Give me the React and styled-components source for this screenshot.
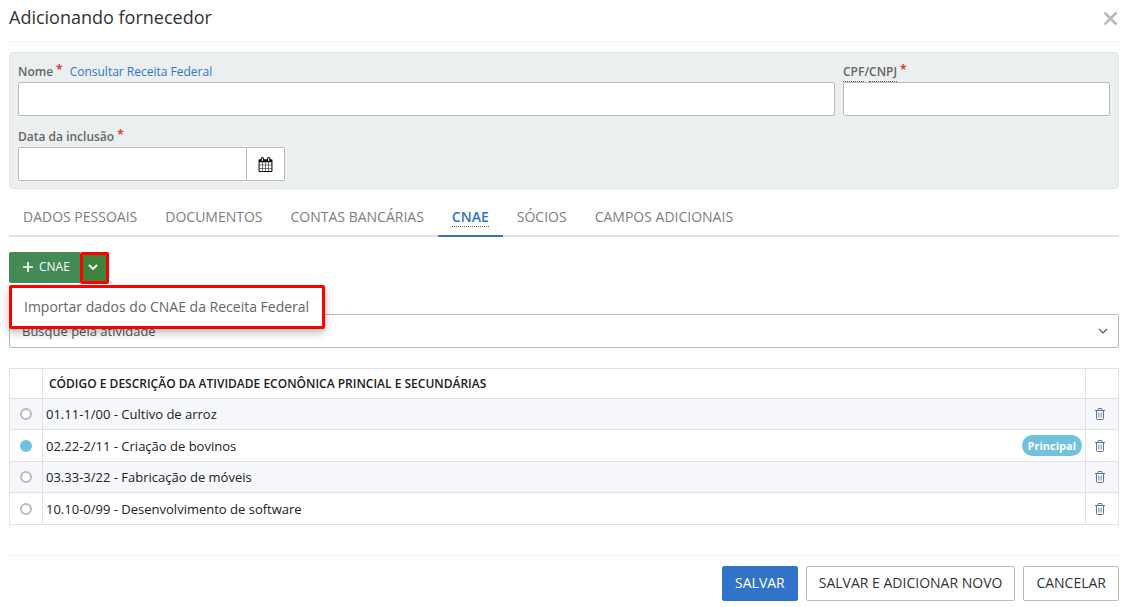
import React, { useState } from 'react';
import styled, { createGlobalStyle, css } from 'styled-components';

const GlobalStyle = createGlobalStyle`
    * {
        box-sizing: border-box;
    }
    body {
        margin: 0;
        background: #fff;
        color: #212121;
        font-family: "Open Sans", "Noto Sans", sans-serif;
        font-size: 13px;
    }
    button, input, select {
        font-family: inherit;
    }
`

const Modal = styled.div`
    padding: 0 10px 0 9px;
`

const Header = styled.header`
    display: flex;
    align-items: center;
    justify-content: space-between;
    height: 42px;
    padding-bottom: 7px;
    border-bottom: 1px solid #f4f4f4;
`

const Title = styled.h1`
    margin: 0;
    font-size: 18px;
    font-weight: 400;
    line-height: 24px;
    color: #333;
`

const CloseButton = styled.button`
    display: flex;
    padding: 3px 1px 0;
    border: 0;
    background: none;
    color: #bbb;
    cursor: pointer;
`

const Panel = styled.form`
    display: grid;
    grid-template-columns: repeat(12, 1fr);
    gap: 11px 8px;
    margin-top: 10px;
    padding: 9px 8px 7px;
    border: 1px solid #e2e5e6;
    border-radius: 4px;
    background: #ebeff0;
`

const Field = styled.div`
    grid-column: ${props => props.$start || 'auto'} / span ${props => props.$span};
`

const LabelRow = styled.div`
    display: flex;
    height: 20px;
    line-height: 20px;
    font-size: 12px;
`

const Label = styled.label`
    font-weight: 600;
    color: #666;
`

const Abbr = styled.abbr`
    display: inline-block;
    line-height: 18px;
    border-bottom: 1px dotted #555;
    text-decoration: none;
`

const Required = styled.span`
    margin-left: 3px;
    line-height: 15px;
    font-weight: 700;
    color: #e03c3c;
`

const Link = styled.a`
    margin-left: 7px;
    color: #3174c7;
    text-decoration: none;
`

const Input = styled.input`
    display: block;
    width: 100%;
    min-width: 0;
    height: 34px;
    padding: 0 8px;
    border: 1px solid #bbb;
    border-radius: 2px;
    background: #fff;
    font-size: 13px;
    outline: none;
`

const InputGroup = styled.div`
    display: flex;
    ${Input} {
        border-radius: 2px 0 0 2px;
    }
`

const AddonButton = styled.button`
    display: flex;
    flex: none;
    align-items: center;
    justify-content: center;
    width: 38px;
    border: 1px solid #bbb;
    border-left: 0;
    border-radius: 0 2px 2px 0;
    background: #fff;
    color: #111;
    cursor: pointer;
`

const Tabs = styled.nav`
    display: flex;
    height: 40px;
    margin-top: 8px;
    border-bottom: 2px solid #e1e1e6;
`

const Tab = styled.button`
    height: 40px;
    padding: 2px 14px 0;
    border: 0;
    border-bottom: 2px solid transparent;
    background: none;
    font-size: 14px;
    line-height: 20px;
    color: #808080;
    cursor: pointer;
    ${props => props.$active && css`
        border-bottom-color: #3174c7;
        font-weight: 600;
        color: #3174c7;
    `}
`

const ButtonGroup = styled.div`
    position: relative;
    display: flex;
    width: max-content;
    margin-top: 15px;
`

const AddButton = styled.button`
    display: flex;
    align-items: center;
    gap: 6px;
    height: 31px;
    padding: 0 10px 2px 14px;
    border: 0;
    border-radius: 2px 0 0 2px;
    background: #438a54;
    font-size: 12px;
    color: #fff;
    cursor: pointer;
`

const ToggleButton = styled.button`
    display: flex;
    align-items: center;
    justify-content: center;
    width: 29px;
    height: 32px;
    padding: 0 3px 2px 0;
    border: 3px solid #f00;
    border-radius: 2px;
    background: #3c8439;
    color: #fff;
    cursor: pointer;
`

const Menu = styled.div`
    position: absolute;
    z-index: 1;
    top: 100%;
    left: 0;
    margin-top: 1px;
    border: 3px solid #f00;
    border-radius: 2px;
    background: #fff;
    box-shadow: 0 4px 8px rgba(0, 0, 0, .25);
`

const MenuItem = styled.button`
    display: block;
    height: 38px;
    padding: 0 13px 2px 12px;
    border: 0;
    background: none;
    font-size: 14px;
    color: #666;
    white-space: nowrap;
    cursor: pointer;
`

const SelectBox = styled.div`
    display: grid;
    align-items: center;
    margin-top: 30px;
    color: #555;
    svg {
        grid-area: 1 / 1;
        justify-self: end;
        margin-right: 11px;
        z-index: 0;
        pointer-events: none;
    }
`

const Select = styled.select`
    grid-area: 1 / 1;
    appearance: none;
    width: 100%;
    height: 34px;
    padding: 0 30px 0 12px;
    border: 1px solid #bbb;
    border-radius: 2px;
    background: #fff;
    font-size: 13px;
    color: #555;
    outline: none;
`

const Table = styled.table`
    width: 100%;
    margin-top: 20px;
    border-collapse: collapse;
    table-layout: fixed;
    line-height: 18px;
    th, td {
        padding: 0 3px;
        border: 1px solid #dfe1e5;
        text-align: left;
    }
    th {
        height: 30px;
        padding: 0 6px;
        font-size: 12px;
        font-weight: 600;
    }
    td {
        height: 31px;
    }
    tbody tr:nth-child(odd) {
        background: #f5f7fb;
    }
    tbody tr:nth-child(even) td {
        height: 32px;
    }
`

const IconCol = styled.col`
    width: 33px;
`

const RowContent = styled.div`
    display: flex;
    align-items: center;
    justify-content: space-between;
`

const Radio = styled.input`
    display: block;
    appearance: none;
    width: 12px;
    height: 12px;
    margin: 0 auto;
    border: 2px solid #bbb;
    border-radius: 50%;
    background: #fff;
    &:checked {
        border-color: #6fc1de;
        background: #6fc1de;
    }
`

const Badge = styled.span`
    padding: 0 6px;
    border-radius: 11px;
    background: #6fc1de;
    font-size: 11px;
    font-weight: 700;
    line-height: 21px;
    color: #fff;
`

const DeleteButton = styled.button`
    display: flex;
    margin-left: 6px;
    padding: 0;
    border: 0;
    background: none;
    color: #6a717c;
    cursor: pointer;
`

const Footer = styled.footer`
    display: flex;
    justify-content: flex-end;
    gap: 8px;
    margin-top: 30px;
    padding: 10px 0 6px;
    border-top: 1px solid #f4f4f4;
`

const Button = styled.button`
    height: 35px;
    padding: 0 12px 2px;
    border: 1px solid #bbb;
    border-radius: 2px;
    background: #fff;
    font-size: 14px;
    color: #333;
    cursor: pointer;
    ${props => props.$primary && css`
        border-color: #3174c7;
        background: #3174c7;
        font-weight: 500;
        color: #fff;
    `}
`

const CloseIcon = () => (
    <svg width="15" height="15" viewBox="0 0 15 15" fill="none" stroke="currentColor" strokeWidth="2.6">
        <path d="M1.5 1.5l12 12M13.5 1.5l-12 12"/>
    </svg>
)

const CalendarIcon = () => (
    <svg width="15" height="15" viewBox="0 0 1792 1792" fill="currentColor">
        <path d="M192 1664h288v-288h-288v288zm352 0h320v-288h-320v288zm-352-352h288v-320h-288v320zm352 0h320v-320h-320v320zm-352-384h288v-288h-288v288zm736 736h320v-288h-320v288zm-384-736h320v-288h-320v288zm768 736h288v-288h-288v288zm-384-352h320v-320h-320v320zm-352-864v-288q0-13-9.5-22.5t-22.5-9.5h-64q-13 0-22.5 9.5t-9.5 22.5v288q0 13 9.5 22.5t22.5 9.5h64q13 0 22.5-9.5t9.5-22.5zm736 864h288v-320h-288v320zm-384-384h320v-288h-320v288zm384 0h288v-288h-288v288zm32-480v-288q0-13-9.5-22.5t-22.5-9.5h-64q-13 0-22.5 9.5t-9.5 22.5v288q0 13 9.5 22.5t22.5 9.5h64q13 0 22.5-9.5t9.5-22.5zm384-64v1280q0 52-38 90t-90 38h-1408q-52 0-90-38t-38-90v-1280q0-52 38-90t90-38h128v-96q0-66 47-113t113-47h64q66 0 113 47t47 113v96h384v-96q0-66 47-113t113-47h64q66 0 113 47t47 113v96h128q52 0 90 38t38 90z"/>
    </svg>
)

const PlusIcon = () => (
    <svg width="10" height="10" viewBox="0 0 10 10" fill="none" stroke="currentColor" strokeWidth="1.6">
        <path d="M5 0v10M0 5h10"/>
    </svg>
)

const ChevronIcon = ({ weight }) => (
    <svg width="10" height="10" viewBox="0 0 10 10" fill="none" stroke="currentColor" strokeWidth={weight}>
        <path d="M1 3l4 4 4-4"/>
    </svg>
)

const TrashIcon = () => (
    <svg width="10" height="12" viewBox="0 0 10 12" fill="none" stroke="currentColor">
        <path d="M0 2.5h10M3 2.5v-1.5q0-.5.5-.5h3q.5 0 .5.5v1.5M1.5 2.5v8q0 1 1 1h5q1 0 1-1v-8"/>
        <path d="M3.5 4.5v5M5 4.5v5M6.5 4.5v5" strokeWidth=".8" stroke="#6f9fdc"/>
    </svg>
)

const tabs = ['Dados pessoais', 'Documentos', 'Contas bancárias', 'CNAE', 'Sócios', 'Campos adicionais'];

const activities = [
    { code: '01.11-1/00', name: 'Cultivo de arroz' },
    { code: '02.22-2/11', name: 'Criação de bovinos' },
    { code: '03.33-3/22', name: 'Fabricação de móveis' },
    { code: '10.10-0/99', name: 'Desenvolvimento de software' }
];

const App = () => {
    const [tab, setTab] = useState('CNAE');
    const [menuOpen, setMenuOpen] = useState(true);
    const [rows, setRows] = useState(activities);
    const [main, setMain] = useState('02.22-2/11');
    const deleteRow = code => {
        setRows(rows.filter(row => row.code !== code));
    }
    return(
        <Modal>
            <GlobalStyle/>
            <Header>
                <Title>Adicionando fornecedor</Title>
                <CloseButton type="button" aria-label="Fechar"><CloseIcon/></CloseButton>
            </Header>
            <Panel onSubmit={e => e.preventDefault()}>
                <Field $span={9}>
                    <LabelRow>
                        <Label htmlFor="nome">Nome</Label>
                        <Required>*</Required>
                        <Link href="#receita">Consultar Receita Federal</Link>
                    </LabelRow>
                    <Input id="nome" type="text"/>
                </Field>
                <Field $span={3}>
                    <LabelRow>
                        <Label htmlFor="documento"><Abbr>CPF</Abbr>/<Abbr>CNPJ</Abbr></Label>
                        <Required>*</Required>
                    </LabelRow>
                    <Input id="documento" type="text"/>
                </Field>
                <Field $start={1} $span={3}>
                    <LabelRow>
                        <Label htmlFor="inclusao">Data da inclusão</Label>
                        <Required>*</Required>
                    </LabelRow>
                    <InputGroup>
                        <Input id="inclusao" type="text"/>
                        <AddonButton type="button" aria-label="Abrir calendário"><CalendarIcon/></AddonButton>
                    </InputGroup>
                </Field>
            </Panel>
            <Tabs>
                {tabs.map(name => (
                    <Tab key={name} type="button" $active={name === tab} onClick={() => setTab(name)}>
                        {name === 'CNAE' ? <Abbr>CNAE</Abbr> : name.toUpperCase()}
                    </Tab>
                ))}
            </Tabs>
            <ButtonGroup>
                <AddButton type="button"><PlusIcon/>CNAE</AddButton>
                <ToggleButton type="button" aria-label="Mais opções" aria-expanded={menuOpen} onClick={() => setMenuOpen(!menuOpen)}>
                    <ChevronIcon weight={1.8}/>
                </ToggleButton>
                {menuOpen ? (
                    <Menu>
                        <MenuItem type="button">Importar dados do CNAE da Receita Federal</MenuItem>
                    </Menu>
                ) : null}
            </ButtonGroup>
            <SelectBox>
                <Select aria-label="Atividade" defaultValue="">
                    <option value="">Busque pela atividade</option>
                </Select>
                <ChevronIcon weight={1.2}/>
            </SelectBox>
            <Table>
                <colgroup>
                    <IconCol/>
                    <col/>
                    <IconCol/>
                </colgroup>
                <thead>
                    <tr>
                        <th></th>
                        <th>CÓDIGO E DESCRIÇÃO DA ATIVIDADE ECONÔNICA PRINCIAL E SECUNDÁRIAS</th>
                        <th></th>
                    </tr>
                </thead>
                <tbody>
                    {rows.map(row => (
                        <tr key={row.code}>
                            <td>
                                <Radio type="radio" name="principal" aria-label={row.name} checked={row.code === main} onChange={() => setMain(row.code)}/>
                            </td>
                            <td>
                                <RowContent>
                                    {row.code} - {row.name}
                                    {row.code === main ? <Badge>Principal</Badge> : null}
                                </RowContent>
                            </td>
                            <td>
                                <DeleteButton type="button" aria-label="Excluir" onClick={() => deleteRow(row.code)}><TrashIcon/></DeleteButton>
                            </td>
                        </tr>
                    ))}
                </tbody>
            </Table>
            <Footer>
                <Button type="button" $primary>SALVAR</Button>
                <Button type="button">SALVAR E ADICIONAR NOVO</Button>
                <Button type="button">CANCELAR</Button>
            </Footer>
        </Modal>
    )
}

export default App;
